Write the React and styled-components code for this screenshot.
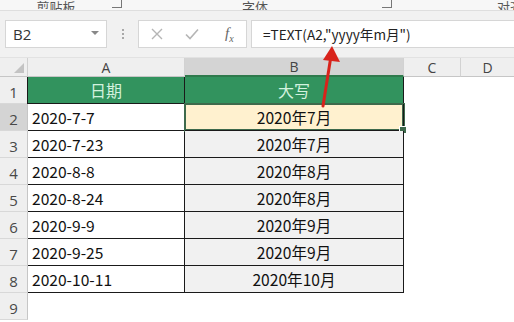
import React from 'react';
import styled, { createGlobalStyle } from 'styled-components';

const GlobalStyle = createGlobalStyle`
  html, body {
    margin: 0;
    padding: 0;
    background: #ffffff;
    font-family: "Noto Sans CJK SC", "Noto Sans", sans-serif;
  }
`;

const dates = ['2020-7-7', '2020-7-23', '2020-8-8', '2020-8-24', '2020-9-9', '2020-9-25', '2020-10-11'];
const results = ['2020年7月', '2020年7月', '2020年8月', '2020年8月', '2020年9月', '2020年9月', '2020年10月'];

const App = () => {
  return (
    <Page>
      <GlobalStyle />
      <Ribbon>
        <GroupLabel $width={112}>剪贴板</GroupLabel>
        <Launcher />
        <GroupLabel $width={254}>字体</GroupLabel>
        <Launcher />
        <GroupLabel $width={118} $offset={99}>对齐方式</GroupLabel>
      </Ribbon>

      <FormulaBar>
        <NameBox>
          <span>B2</span>
          <DropArrow />
        </NameBox>
        <Grip>
          <i />
          <i />
          <i />
        </Grip>
        <FxButtons>
          <svg width="12" height="12" viewBox="0 0 12 12">
            <path d="M1 1 L11 11 M11 1 L1 11" stroke="#b5b5b5" strokeWidth="1.4" fill="none" />
          </svg>
          <svg width="14" height="12" viewBox="0 0 14 12">
            <path d="M1 6.5 L5 10.5 L13 1.5" stroke="#b5b5b5" strokeWidth="1.6" fill="none" />
          </svg>
          <FxLabel>
            f<sub>x</sub>
          </FxLabel>
        </FxButtons>
        <FormulaInput>=TEXT(A2,"yyyy年m月")</FormulaInput>
      </FormulaBar>

      <Sheet>
        <Corner />
        <ColHeader>A</ColHeader>
        <ColHeader $selected>B</ColHeader>
        <ColHeader>C</ColHeader>
        <ColHeader $last>D</ColHeader>

        <RowHeader>1</RowHeader>
        <HeadCell $first>日期</HeadCell>
        <HeadCell>大写</HeadCell>
        <Blank />
        <Blank />

        {dates.map((d, i) => (
          <React.Fragment key={d}>
            <RowHeader $selected={i === 0}>{i + 2}</RowHeader>
            <DateCell>{d}</DateCell>
            <ResultCell $active={i === 0}>
              {results[i]}
              {i === 0 && <FillHandle />}
            </ResultCell>
            <Blank />
            <Blank />
          </React.Fragment>
        ))}

        <RowHeader>9</RowHeader>
        <Blank />
        <Blank />
        <Blank />
        <Blank />
      </Sheet>

      <Arrow width="30" height="66" viewBox="0 0 30 66">
        <path d="M8 61 L15.5 14" stroke="#d8231b" strokeWidth="3" fill="none" strokeLinecap="round" />
        <path d="M17 1 L25 17 L8 15 Z" fill="#d8231b" />
      </Arrow>
    </Page>
  );
};

const Page = styled.div`
  position: relative;
  width: 514px;
  height: 322px;
  overflow: hidden;
  background: #ffffff;
`;

const Ribbon = styled.div`
  height: 10px;
  background: #f7f7f7;
  border-bottom: 1px solid #dedede;
  box-shadow: 0 1px 2px rgba(0, 0, 0, 0.06);
  display: flex;
  align-items: flex-end;
  overflow: hidden;
`;

const GroupLabel = styled.div`
  width: ${(props) => props.$width}px;
  flex: none;
  box-sizing: border-box;
  text-align: ${(props) => (props.$offset ? 'left' : 'center')};
  padding-left: ${(props) => props.$offset || 0}px;
  font-size: 13px;
  line-height: 13px;
  color: #555;
  margin-bottom: -3px;
  white-space: nowrap;
`;

const Launcher = styled.div`
  width: 9px;
  height: 9px;
  flex: none;
  border-right: 1px solid #777;
  border-bottom: 1px solid #777;
  margin-bottom: 2px;
  margin-right: 6px;
`;

const FormulaBar = styled.div`
  height: 46px;
  background: #f1f1f1;
  display: flex;
  align-items: flex-start;
  padding: 9px 0 0 5px;
  box-sizing: border-box;
`;

const NameBox = styled.div`
  width: 102px;
  height: 28px;
  box-sizing: border-box;
  background: #fff;
  border: 1px solid #d6d6d6;
  display: flex;
  align-items: center;
  justify-content: space-between;
  padding: 0 7px 0 7px;
  font-size: 15px;
  color: #333;
  font-family: "Open Sans", "Noto Sans", sans-serif;
`;

const DropArrow = styled.div`
  width: 0;
  height: 0;
  border-left: 4px solid transparent;
  border-right: 4px solid transparent;
  border-top: 4px solid #888;
  margin-top: -2px;
`;

const Grip = styled.div`
  width: 31px;
  height: 28px;
  display: flex;
  flex-direction: column;
  align-items: center;
  justify-content: center;
  gap: 2px;

  i {
    width: 2px;
    height: 2px;
    background: #a8a8a8;
    display: block;
  }
`;

const FxButtons = styled.div`
  width: 109px;
  height: 28px;
  box-sizing: border-box;
  background: #fff;
  border: 1px solid #d6d6d6;
  display: flex;
  align-items: center;
  padding: 0 9px 0 12px;
  gap: 22px;
`;

const FxLabel = styled.span`
  font-family: "Liberation Serif", serif;
  font-style: italic;
  font-size: 15px;
  color: #666;
  margin-left: 4px;

  sub {
    font-size: 10px;
  }
`;

const FormulaInput = styled.div`
  flex: 1;
  height: 28px;
  margin-left: 4px;
  box-sizing: border-box;
  background: #fff;
  border: 1px solid #d6d6d6;
  border-right: none;
  display: flex;
  align-items: center;
  padding-left: 11px;
  font-size: 13.6px;
  color: #222;
`;

const Sheet = styled.div`
  display: grid;
  grid-template-columns: 28px 157px 219px 57px 1fr;
  grid-template-rows: 19px repeat(9, 27px);
  border-top: 1px solid #e2e2e2;
`;

const Corner = styled.div`
  background: #efefef;
  border-right: 1px solid #d0d0d0;
  border-bottom: 1px solid #c6c6c6;
  position: relative;

  &::after {
    content: '';
    position: absolute;
    right: 3px;
    bottom: 3px;
    border-left: 10px solid transparent;
    border-bottom: 10px solid #c3c3c3;
  }
`;

const ColHeader = styled.div`
  background: ${(props) => (props.$selected ? '#d4d4d4' : '#efefef')};
  border-right: ${(props) => (props.$last ? 'none' : '1px solid #d2d2d2')};
  border-bottom: ${(props) => (props.$selected ? '2px solid #2f7a4d' : '1px solid #c6c6c6')};
  font-family: "Open Sans", "Noto Sans", sans-serif;
  font-size: 14px;
  color: #444;
  display: flex;
  align-items: center;
  justify-content: center;
`;

const RowHeader = styled.div`
  background: ${(props) => (props.$selected ? '#d4d4d4' : '#efefef')};
  border-right: 1px solid #c6c6c6;
  border-bottom: 1px solid #d8d8d8;
  font-family: "Open Sans", "Noto Sans", sans-serif;
  font-size: 15px;
  color: #484848;
  display: flex;
  align-items: flex-end;
  justify-content: center;
  padding-bottom: 1px;
`;

const Cell = styled.div`
  border-right: 1px solid #1a1a1a;
  border-bottom: 1px solid #1a1a1a;
  display: flex;
  align-items: center;
  font-size: 15.6px;
  color: #111;
  white-space: nowrap;
`;

const HeadCell = styled(Cell)`
  background: #32935e;
  color: #d3f2df;
  justify-content: center;
  font-size: 16px;
  border-left: ${(props) => (props.$first ? '1px solid #1a1a1a' : 'none')};
  margin-left: ${(props) => (props.$first ? '-1px' : '0')};
`;

const DateCell = styled(Cell)`
  padding-left: 4px;
`;

const ResultCell = styled(Cell)`
  position: relative;
  justify-content: center;
  background: ${(props) => (props.$active ? '#fff1cf' : '#f1f1f1')};
  box-shadow: ${(props) => (props.$active ? 'inset 0 0 0 1px #3e6a4c, 0 0 0 1px #3e6a4c' : 'none')};
`;

const FillHandle = styled.span`
  position: absolute;
  right: -4px;
  bottom: -4px;
  width: 6px;
  height: 6px;
  background: #3e6a4c;
  border: 1px solid #fff;
  box-sizing: content-box;
`;

const Blank = styled.div`
  background: #fff;
`;

const Arrow = styled.svg`
  position: absolute;
  left: 315px;
  top: 45px;
`;

export default App;
